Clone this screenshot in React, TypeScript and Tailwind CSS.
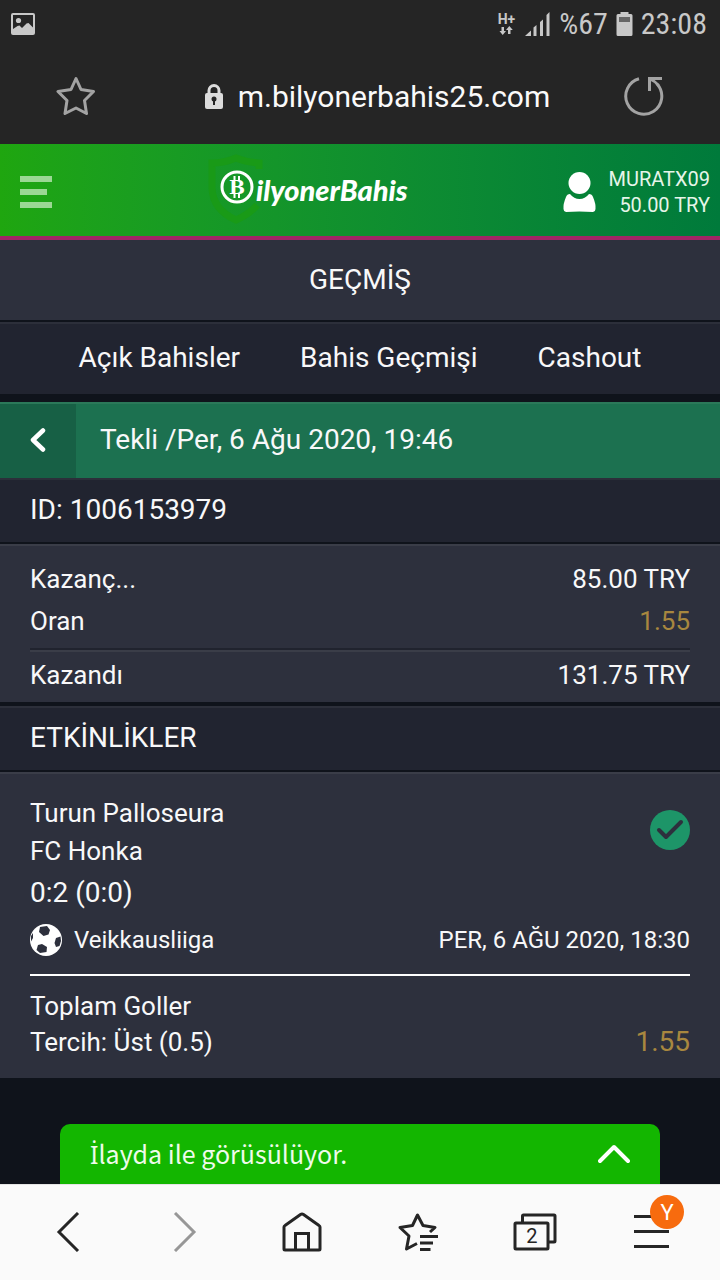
import type { ReactNode } from "react";

const tabs = ["Açık Bahisler", "Bahis Geçmişi", "Cashout"];

function StatusBar() {
  return (
    <div className="flex h-12 items-center justify-between pl-[11px] pr-[13px] font-['Roboto_Condensed','Liberation_Sans_Narrow','Roboto',sans-serif] text-[30px] leading-8 text-[#c8c8c8]">
      <svg width="24" height="22" viewBox="0 0 24 22" aria-hidden="true">
        <rect x="1" y="1" width="22" height="20" rx="1" fill="none" stroke="#c8c8c8" strokeWidth="2" />
        <circle cx="7.5" cy="7.5" r="2.6" fill="#c8c8c8" />
        <path d="M2 16 L6.5 13 L8.5 12.5 L11 15 L15.5 10.5 L17.5 10 L22 14.5 V21 H2Z" fill="#c8c8c8" />
      </svg>
      <div className="flex items-center">
        <span className="mr-2.5 flex flex-col items-center" aria-label="H+">
          <span className="h-3.5 font-['Roboto',sans-serif] text-[14px] font-bold leading-3.5">H+</span>
          <svg width="14" height="10" viewBox="0 0 14 10" fill="#c8c8c8" aria-hidden="true">
            <path d="M2.5 1 H5 V5 H7 L3.7 9 L0.5 5 H2.5Z" />
            <path d="M9 8 H11.5 V4 H13.8 L10.3 0 L7 4 H9Z" />
          </svg>
        </span>
        <svg className="mr-2" width="26" height="24" viewBox="0 0 26 24" fill="#c8c8c8" aria-hidden="true">
          <path d="M0 24 L6 18.5 V24Z" />
          <path d="M8.5 15.5 L11.5 13 V24 H8.5Z" />
          <path d="M15 10 L18 7.5 V24 H15Z" />
          <path d="M21.5 3 L24.5 0 V24 H21.5Z" />
        </svg>
        <span>%67</span>
        <svg className="mx-2" width="17" height="24" viewBox="0 0 17 24" aria-hidden="true">
          <path d="M4.5 0 H12.5 V2 H15 Q16.5 2 16.5 3.5 V22.5 Q16.5 24 15 24 H2 Q0.5 24 0.5 22.5 V3.5 Q0.5 2 2 2 H4.5Z" fill="#c8c8c8" />
          <rect x="3" y="5" width="11" height="5" fill="#666" />
        </svg>
        <span>23:08</span>
      </div>
    </div>
  );
}

function AddressBar() {
  return (
    <div className="flex h-24 items-center justify-between px-14">
      <button aria-label="Yer imi ekle">
        <svg width="40" height="40" viewBox="0 0 40 40" fill="none" stroke="#a3a3a3" strokeWidth="3" strokeLinejoin="round" aria-hidden="true">
          <path d="M20 2.5 L25 13.5 L37.5 15.5 L28.5 24.5 L30.5 37.5 L20 32 L9 37.5 L11 24.5 L2 15.5 L15 13.5Z" />
        </svg>
      </button>
      <div className="flex items-center gap-3.5 pl-[34px] pt-0.5">
        <svg width="20" height="26" viewBox="0 0 20 26" aria-hidden="true">
          <path d="M5 11 V6.5 A5 5 0 0 1 15 6.5 V11" fill="none" stroke="#dcdcdc" strokeWidth="3" />
          <rect x="1" y="9" width="18" height="16" rx="2" fill="#dcdcdc" />
          <circle cx="10" cy="15" r="2.5" fill="#252525" />
          <rect x="9" y="15" width="2" height="6" fill="#252525" />
        </svg>
        <span className="text-[30px] leading-9 text-[#fafafa]">m.bilyonerbahis25.com</span>
      </div>
      <button aria-label="Yenile">
        <svg width="40" height="40" viewBox="0 0 40 40" fill="none" stroke="#a3a3a3" strokeWidth="3" aria-hidden="true">
          <path d="M15 2.8 A18 18 0 1 0 33.5 8.5" />
          <path d="M25.5 15 V2.5 H38 M25.5 2.5 Q31 5 34.5 9.5" />
        </svg>
      </button>
    </div>
  );
}

function Logo() {
  return (
    <a href="#" className="-mt-1 flex items-center" aria-label="BilyonerBahis">
      <svg width="48" height="72" viewBox="0 0 48 72" className="overflow-visible" aria-hidden="true">
        <path
          d="M51 15 V9 Q38 8 28 4 Q16 9 4 9 V34 Q5 56 28 66 Q42 60 49 51"
          fill="none"
          stroke="#199a17"
          strokeWidth="7"
        />
        <circle cx="29" cy="33" r="15" fill="none" stroke="#fff" strokeWidth="3" />
        <path d="M26.5 22 V27 M31 22 V27 M26.5 39 V44 M31 39 V44" stroke="#fff" strokeWidth="2" />
        <text x="29" y="40" textAnchor="middle" fontSize="19" fontWeight="700" fill="#fff" className="font-['DejaVu_Serif',serif]">
          B
        </text>
      </svg>
      <span className="font-['Lato',sans-serif] text-[29px] font-black italic leading-8 text-white">ilyonerBahis</span>
    </a>
  );
}

function SiteHeader() {
  return (
    <header className="flex h-24 items-center justify-between border-b-4 border-[#a12566] bg-linear-to-r from-[#1fa60f] to-[#007a3b] pl-5 pr-2.5 pt-1">
      <button className="flex flex-col gap-[7px]" aria-label="Menü">
        <span className="h-1.5 w-8 bg-[#9bd894]" />
        <span className="h-1.5 w-[27px] bg-[#9bd894]" />
        <span className="h-1.5 w-8 bg-[#9bd894]" />
      </button>
      <Logo />
      <div className="flex items-center gap-3">
        <svg width="33" height="42" viewBox="0 0 33 42" fill="#fff" aria-hidden="true">
          <circle cx="16.5" cy="12" r="11" />
          <path d="M7 23 Q11 28 16.5 28 Q22 28 26 23 Q29 23 30 26 Q33 33 32.5 38 Q32.5 40.5 30 41 Q16 40 3 41 Q0.5 40.5 0.5 38 Q0 33 3 26 Q4 23 7 23Z" />
        </svg>
        <p className="text-right text-[20px] leading-[26px] text-[#e6f5e9]">
          MURATX09
          <br />
          50.00 TRY
        </p>
      </div>
    </header>
  );
}

function SectionTitle({ children }: { children: ReactNode }) {
  return (
    <h2 className="h-16 border-t-2 border-[#2c2f3a] bg-[#212430] px-[30px] text-[28px] leading-[60px]">{children}</h2>
  );
}

function Summary() {
  return (
    <dl className="mt-0.5 border-t-2 border-[#3a3d48] bg-[#2d303d] px-[30px] pb-1 pt-3 text-[26px] leading-[42px]">
      <div className="flex justify-between">
        <dt>Kazanç...</dt>
        <dd>85.00 TRY</dd>
      </div>
      <div className="flex justify-between border-b-2 border-[#20232e] pb-1.5">
        <dt>Oran</dt>
        <dd className="text-[#a8873f]">1.55</dd>
      </div>
      <div className="flex justify-between border-t-2 border-[#3a3d48] py-0.5">
        <dt>Kazandı</dt>
        <dd>131.75 TRY</dd>
      </div>
    </dl>
  );
}

function EventCard() {
  return (
    <section className="mt-0.5 border-t-2 border-[#3a3d48] bg-[#2d303d] px-[30px] pb-[18px] pt-5 text-[26px]">
      <div className="flex justify-between">
        <div className="leading-[38px]">
          <p>Turun Palloseura</p>
          <p>FC Honka</p>
          <p className="text-[28px] leading-[46px]">0:2 (0:0)</p>
        </div>
        <svg className="mt-4" width="40" height="40" viewBox="0 0 40 40" role="img" aria-label="Kazandı">
          <circle cx="20" cy="20" r="20" fill="#1d9568" />
          <path d="M9 20 L16 27 L31 12" fill="none" stroke="#2d303d" strokeWidth="4" strokeLinecap="round" strokeLinejoin="round" />
        </svg>
      </div>
      <div className="flex items-center justify-between border-b-2 border-white pb-[10px] text-[24px] leading-[48px]">
        <div className="flex items-center gap-3">
          <svg width="32" height="32" viewBox="0 0 32 32" aria-hidden="true">
            <circle cx="16" cy="16" r="16" fill="#fff" />
            <g fill="#2d303d">
              <path d="M10 3 L17 2 L20 6 L18.5 10.5 L13.5 12 L9 8Z" />
              <path d="M26 14 L30.5 12.5 L31 17 L29.5 22 L26 23 L24.5 19Z" />
              <path d="M8 21 L12 20 L17 23 L16.5 28 L10 29 L6.5 26Z" />
              <path d="M1 12 L3 9 L3 14 L1 17.5Z" />
            </g>
          </svg>
          <span>Veikkausliiga</span>
        </div>
        <time>PER, 6 AĞU 2020, 18:30</time>
      </div>
      <div className="flex items-end justify-between pt-3 leading-9">
        <p>
          Toplam Goller
          <br />
          Tercih: Üst (0.5)
        </p>
        <span className="text-[28px] text-[#a8873f]">1.55</span>
      </div>
    </section>
  );
}

function BrowserNav() {
  return (
    <nav className="grid h-24 grid-cols-6 items-center justify-items-center border-t border-[#e4e4e4] bg-[#fafafa] px-2.5 pb-0.5 text-[#252525]">
      <button aria-label="Geri">
        <svg width="24" height="40" viewBox="0 0 24 40" fill="none" stroke="currentColor" strokeWidth="3" aria-hidden="true">
          <path d="M22 1 L3 20 L22 39" />
        </svg>
      </button>
      <button aria-label="İleri" className="text-[#979797]">
        <svg width="24" height="40" viewBox="0 0 24 40" fill="none" stroke="currentColor" strokeWidth="3" aria-hidden="true">
          <path d="M2 1 L21 20 L2 39" />
        </svg>
      </button>
      <button aria-label="Ana sayfa">
        <svg width="40" height="40" viewBox="0 0 40 40" fill="none" stroke="currentColor" strokeWidth="3" strokeLinejoin="round" aria-hidden="true">
          <path d="M2 15 Q2 14 3 13.5 L18.5 2.5 Q20 1.5 21.5 2.5 L37 13.5 Q38 14 38 15 V37 Q38 38 37 38 H3 Q2 38 2 37Z" />
          <path d="M13.5 38 V21.5 H26.5 V38" strokeLinejoin="miter" />
        </svg>
      </button>
      <button aria-label="Yer imleri">
        <svg width="40" height="40" viewBox="0 0 40 40" fill="none" stroke="currentColor" strokeWidth="3" aria-hidden="true">
          <path d="M32 20 L37 15.5 L25 13.5 L19.5 3 L14.5 13.5 L2 15.5 L11 24 L8.5 37 L19 31.5" strokeLinejoin="round" />
          <path d="M22 24.5 H40 M22 31 H35 M22 37.5 H32.5" />
        </svg>
      </button>
      <button aria-label="Sekmeler" className="relative">
        <svg width="44" height="38" viewBox="0 0 44 38" fill="none" stroke="currentColor" strokeWidth="3" strokeLinejoin="round" aria-hidden="true">
          <path d="M9.5 9 V3 Q9.5 2 10.5 2 H41 Q42 2 42 3 V28 Q42 29 41 29 H36" />
          <rect x="2" y="10" width="33" height="26" rx="1" />
        </svg>
        <span className="absolute left-0 top-[11px] w-[38px] text-center text-[20px] leading-6">2</span>
      </button>
      <button aria-label="Menü" className="relative flex flex-col gap-3">
        <span className="h-[3px] w-[35px] bg-[#252525]" />
        <span className="h-[3px] w-[35px] bg-[#252525]" />
        <span className="h-[3px] w-[35px] bg-[#252525]" />
        <span className="absolute -top-5 left-4 size-[34px] rounded-full bg-[#f76b0e] text-[22px] leading-9 text-white">Y</span>
      </button>
    </nav>
  );
}

export default function App() {
  return (
    <div className="flex min-h-screen flex-col bg-[#0f131b] font-['Roboto',sans-serif] text-[#f8f8f9]">
      <div className="bg-[#252525]">
        <StatusBar />
        <AddressBar />
      </div>
      <SiteHeader />
      <main className="flex-1 pb-[46px]">
        <h1 className="bg-[#2d303d] text-center text-[28px] leading-[80px]">GEÇMİŞ</h1>
        <nav className="mt-0.5 flex justify-center gap-[60px] border-t-2 border-[#2c2f3a] bg-[#212430] pb-0.5 text-[28px] leading-[68px]">
          {tabs.map((tab) => (
            <a key={tab} href="#">
              {tab}
            </a>
          ))}
        </nav>
        <div className="mt-2 flex h-[76px] border-t-2 border-[#2b7859] bg-[#1c7150] text-[28px] leading-[72px]">
          <button className="flex w-[76px] items-center justify-center bg-[#176045] pb-0.5" aria-label="Geri dön">
            <svg width="16" height="24" viewBox="0 0 16 24" fill="none" stroke="#fff" strokeWidth="4.5" strokeLinecap="round" strokeLinejoin="round" aria-hidden="true">
              <path d="M13 2.5 L3 12 L13 21.5" />
            </svg>
          </button>
          <p className="px-6">Tekli /Per, 6 Ağu 2020, 19:46</p>
        </div>
        <SectionTitle>ID: 1006153979</SectionTitle>
        <Summary />
        <div className="h-1" />
        <SectionTitle>ETKİNLİKLER</SectionTitle>
        <EventCard />
      </main>
      <button className="mx-[60px] flex h-[60px] items-center justify-between rounded-t-[10px] bg-[#13b600] px-[30px] font-['Noto_Sans_CJK_SC',sans-serif] text-[25px] text-[#eefbea]">
        <span>
          <span className="font-['Noto_Sans',sans-serif]">İ</span>layda ile görüsülüyor.
        </span>
        <svg width="32" height="20" viewBox="0 0 32 20" fill="none" stroke="#fff" strokeWidth="4" strokeLinecap="round" strokeLinejoin="round" aria-hidden="true">
          <path d="M2 17 L16 3 L30 17" />
        </svg>
      </button>
      <BrowserNav />
    </div>
  );
}
